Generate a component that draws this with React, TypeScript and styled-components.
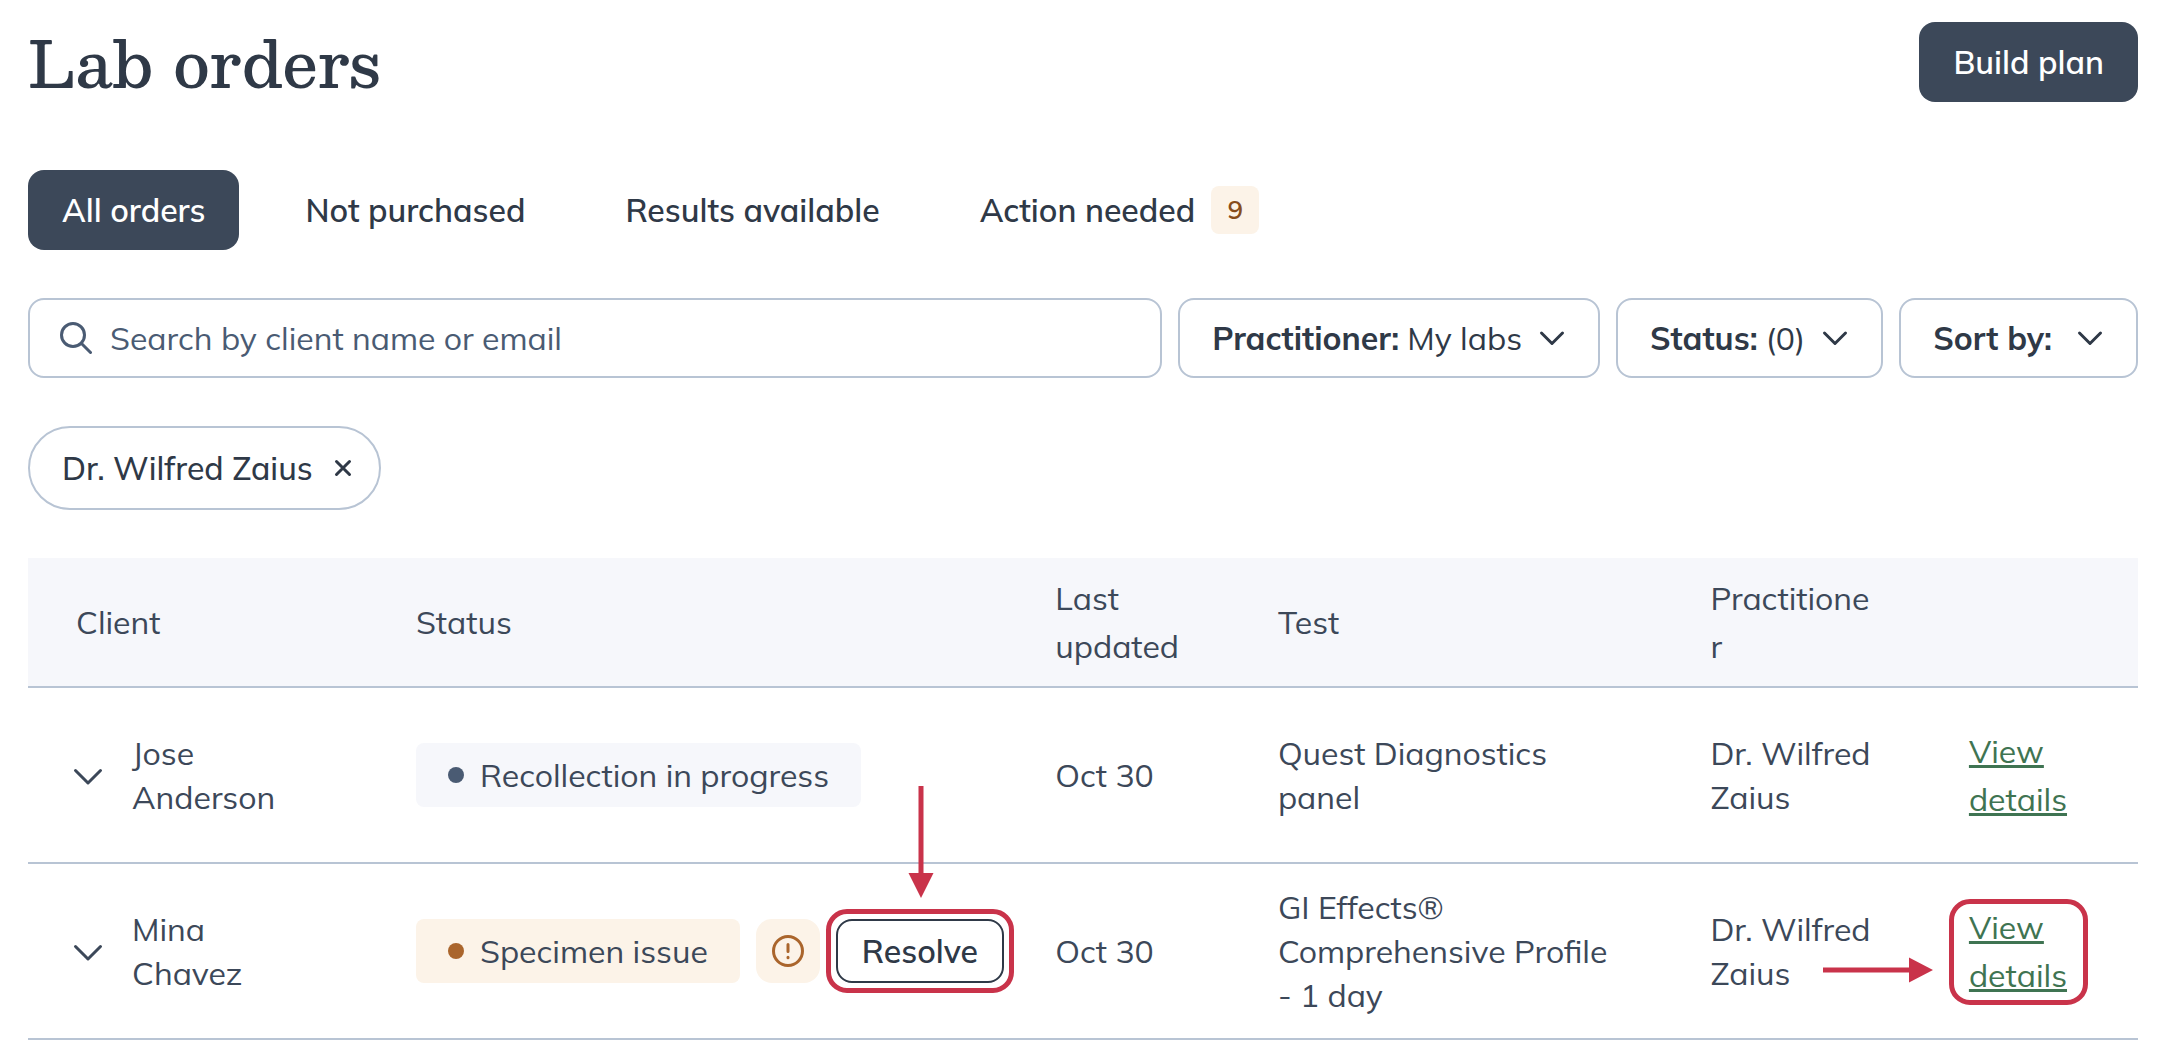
import React, { useState } from 'react';
import styled, { createGlobalStyle } from 'styled-components';

const color = {
  ink: '#2f3947',
  text: '#3c4859',
  muted: '#4a5b73',
  line: '#b8c4d4',
  surface: '#f6f7fb',
  warnSurface: '#fcf3e8',
  warn: '#aa652c',
  warnText: '#874c1b',
  link: '#3f7452',
  mark: '#c9334a',
};

const sans = '"Mulish", "Open Sans", "Noto Sans", sans-serif';
const serif = '"Besley", "DejaVu Serif", serif';

const GlobalStyle = createGlobalStyle`
  *, *::before, *::after { box-sizing: border-box; }
  body { margin: 0; background: #ffffff; color: ${color.text}; font-family: ${sans}; font-size: 32px; line-height: 48px; }
  button, input, select { font: inherit; color: inherit; margin: 0; }
`;

const Page = styled.main`
  display: flex;
  flex-direction: column;
  padding: 22px 26px 0 28px;
`;

const Header = styled.header`
  display: flex;
  align-items: center;
  justify-content: space-between;
  margin-bottom: 68px;
`;

const Title = styled.h1`
  margin: 0;
  font-family: ${serif};
  font-size: 64px;
  font-weight: 500;
  line-height: 80px;
  color: ${color.ink};
`;

const Button = styled.button<{ $filled?: boolean }>`
  display: flex;
  align-items: center;
  gap: 16px;
  height: 80px;
  padding: 0 34px;
  border: 0;
  border-radius: 16px;
  white-space: nowrap;
  font-weight: 600;
  cursor: pointer;
  background: ${p => (p.$filled ? color.text : 'transparent')};
  color: ${p => (p.$filled ? '#ffffff' : color.ink)};
`;

const Tabs = styled.nav`
  display: flex;
  gap: 32px;
  margin-bottom: 48px;
`;

const Count = styled.span`
  width: 48px;
  border-radius: 8px;
  background: ${color.warnSurface};
  color: ${color.warnText};
  font-size: 26px;
  text-align: center;
`;

const Filters = styled.div`
  display: flex;
  gap: 16px;
  margin-bottom: 48px;
`;

const Field = styled.label`
  display: flex;
  align-items: center;
  height: 80px;
  padding: 0 30px;
  border: 2px solid ${color.line};
  border-radius: 16px;
  color: ${color.ink};
`;

const SearchField = styled(Field)`
  flex: 1;
  gap: 18px;
  color: ${color.muted};
`;

const SearchInput = styled.input`
  flex: 1;
  min-width: 0;
  padding: 0;
  border: 0;
  outline: 0;
  background: transparent;
  &::placeholder { color: ${color.muted}; opacity: 1; }
`;

const SelectField = styled(Field)`
  padding: 0 30px 0 32px;
  white-space: nowrap;
`;

const SelectLabel = styled.span`
  margin-right: 8px;
  font-weight: 700;
`;

const Select = styled.select`
  appearance: none;
  margin-right: 14px;
  padding: 0;
  border: 0;
  outline: 0;
  background: transparent;
  field-sizing: content;
`;

const Chips = styled.div`
  display: flex;
  margin-bottom: 48px;
`;

const Chip = styled.div`
  display: flex;
  align-items: center;
  gap: 14px;
  height: 84px;
  padding: 0 20px 0 32px;
  border: 2px solid ${color.line};
  border-radius: 42px;
  color: ${color.ink};
  font-weight: 500;
`;

const IconButton = styled.button`
  display: flex;
  padding: 0;
  border: 0;
  background: transparent;
  cursor: pointer;
`;

const Icon = styled.svg`
  display: block;
  flex: none;
  width: 32px;
  height: 32px;
  fill: none;
  stroke: currentColor;
  stroke-width: 3;
  stroke-linecap: round;
  stroke-linejoin: round;
`;

const Table = styled.table`
  width: 100%;
  table-layout: fixed;
  border-spacing: 0;
`;

const Col = styled.col<{ $share: number }>`
  width: ${p => p.$share}%;
`;

const HeadCell = styled.th`
  height: 130px;
  padding: 16px 72px 16px 24px;
  border-bottom: 2px solid ${color.line};
  background: ${color.surface};
  font-weight: 400;
  text-align: left;
  overflow-wrap: anywhere;
  &:first-child { padding-left: 48px; }
`;

const Cell = styled.td`
  height: 176px;
  padding: 0 72px 0 24px;
  border-bottom: 2px solid ${color.line};
  line-height: 44px;
  &:first-child { padding-left: 44px; }
`;

const TightCell = styled(Cell)`
  padding-right: 0;
`;

const LinkCell = styled(Cell)`
  padding-right: 48px;
  line-height: 48px;
`;

const Client = styled.div`
  display: flex;
  align-items: center;
  gap: 28px;
`;

const StatusLine = styled.div`
  display: flex;
  align-items: center;
  gap: 16px;
  white-space: nowrap;
`;

const Tag = styled.span<{ $warn?: boolean }>`
  display: flex;
  align-items: center;
  gap: 16px;
  height: 64px;
  padding: 0 32px;
  border-radius: 8px;
  background: ${p => (p.$warn ? color.warnSurface : color.surface)};
  &::before {
    content: '';
    width: 16px;
    height: 16px;
    border-radius: 50%;
    background: ${p => (p.$warn ? color.warn : color.muted)};
  }
`;

const Alert = styled(IconButton)`
  padding: 16px;
  border-radius: 16px;
  background: ${color.warnSurface};
  color: ${color.warn};
`;

const ResolveButton = styled(Button)`
  height: 64px;
  padding: 0 24px;
  border: 2px solid ${color.ink};
`;

const Marked = styled.div`
  position: relative;
`;

const Ring = styled.span<{ $inset: string }>`
  position: absolute;
  inset: ${p => p.$inset};
  border: 5px solid ${color.mark};
  border-radius: 21px;
  pointer-events: none;
`;

const DownArrow = styled.svg`
  position: absolute;
  left: calc(50% - 12px);
  bottom: calc(100% + 21px);
  width: 26px;
  height: 112px;
  fill: ${color.mark};
  pointer-events: none;
`;

const RightArrow = styled.svg`
  position: absolute;
  right: calc(100% + 36px);
  top: 54px;
  width: 110px;
  height: 26px;
  fill: ${color.mark};
  pointer-events: none;
`;

const DetailsLink = styled.a`
  color: ${color.link};
  text-decoration: underline;
  text-decoration-thickness: 3px;
  text-underline-offset: 2px;
  text-decoration-skip-ink: none;
`;

const Chevron = ({ wide }: { wide?: boolean }) => (
  <Icon viewBox="0 0 32 32" aria-hidden="true">
    <path d={wide ? 'M3.5 11.5 L16 24 L28.5 11.5' : 'M5.5 11 L16 21.5 L26.5 11'} />
  </Icon>
);

const orders = [
  { client: 'Jose Anderson', status: 'Recollection in progress', issue: false, updated: 'Oct 30', test: 'Quest Diagnostics panel', practitioner: 'Dr. Wilfred Zaius' },
  { client: 'Mina Chavez', status: 'Specimen issue', issue: true, updated: 'Oct 30', test: 'GI Effects® Comprehensive Profile - 1 day', practitioner: 'Dr. Wilfred Zaius' },
];

const filters = [
  { label: 'Practitioner:', value: 'My labs' },
  { label: 'Status:', value: '(0)' },
  { label: 'Sort by:', value: '' },
];

const tabs = ['All orders', 'Not purchased', 'Results available', 'Action needed'];

export default function App() {
  const [tab, setTab] = useState(tabs[0]);
  return (
    <>
      <GlobalStyle />
      <Page>
        <Header>
          <Title>Lab orders</Title>
          <Button $filled>Build plan</Button>
        </Header>
        <Tabs>
          {tabs.map(name => (
            <Button key={name} $filled={name === tab} onClick={() => setTab(name)}>
              {name}
              {name === 'Action needed' && <Count>9</Count>}
            </Button>
          ))}
        </Tabs>
        <Filters>
          <SearchField>
            <Icon viewBox="0 0 32 32" aria-hidden="true">
              <circle cx="13" cy="13" r="11.5" />
              <path d="M21.5 21.5 L30.5 30.5" />
            </Icon>
            <SearchInput type="text" placeholder="Search by client name or email" aria-label="Search by client name or email" />
          </SearchField>
          {filters.map(f => (
            <SelectField key={f.label}>
              <SelectLabel>{f.label}</SelectLabel>
              <Select defaultValue={f.value}>
                <option value={f.value}>{f.value}</option>
              </Select>
              <Chevron />
            </SelectField>
          ))}
        </Filters>
        <Chips>
          <Chip>
            Dr. Wilfred Zaius
            <IconButton aria-label="Remove Dr. Wilfred Zaius">
              <Icon viewBox="0 0 32 32" strokeWidth="2.5" aria-hidden="true">
                <path d="M9.5 9.5 L22.5 22.5 M22.5 9.5 L9.5 22.5" />
              </Icon>
            </IconButton>
          </Chip>
        </Chips>
        <Table>
          <colgroup>
            <Col $share={17.25} />
            <Col $share={30.3} />
            <Col $share={10.55} />
            <Col $share={20.5} />
            <Col $share={12.25} />
            <Col $share={9.15} />
          </colgroup>
          <thead>
            <tr>
              <HeadCell>Client</HeadCell>
              <HeadCell>Status</HeadCell>
              <HeadCell>Last updated</HeadCell>
              <HeadCell>Test</HeadCell>
              <HeadCell>Practitioner</HeadCell>
              <HeadCell />
            </tr>
          </thead>
          <tbody>
            {orders.map(o => (
              <tr key={o.client}>
                <Cell>
                  <Client>
                    <IconButton aria-label={`Expand ${o.client}`}>
                      <Chevron wide />
                    </IconButton>
                    {o.client}
                  </Client>
                </Cell>
                <TightCell>
                  <StatusLine>
                    <Tag $warn={o.issue}>{o.status}</Tag>
                    {o.issue && (
                      <>
                        <Alert aria-label="Issue information">
                          <Icon viewBox="0 0 32 32" aria-hidden="true">
                            <circle cx="16" cy="16" r="14.5" />
                            <path d="M16 9.5 V16.5 M16 22.3 V22.7" />
                          </Icon>
                        </Alert>
                        <Marked>
                          <ResolveButton>Resolve</ResolveButton>
                          <Ring $inset="-10px" />
                          <DownArrow viewBox="0 0 26 112" aria-hidden="true">
                            <path d="M10.5 0 H15.5 V87 H25.5 L13 112 L0.5 87 H10.5 Z" />
                          </DownArrow>
                        </Marked>
                      </>
                    )}
                  </StatusLine>
                </TightCell>
                <TightCell>{o.updated}</TightCell>
                <Cell>{o.test}</Cell>
                <Cell>{o.practitioner}</Cell>
                <LinkCell>
                  <Marked>
                    <DetailsLink href="#details">View details</DetailsLink>
                    {o.issue && (
                      <>
                        <Ring $inset="-4px 2px -6px -20px" />
                        <RightArrow viewBox="0 0 110 26" aria-hidden="true">
                          <path d="M0 10.5 H86 V0.5 L110 13 L86 25.5 V15.5 H0 Z" />
                        </RightArrow>
                      </>
                    )}
                  </Marked>
                </LinkCell>
              </tr>
            ))}
          </tbody>
        </Table>
      </Page>
    </>
  );
}
